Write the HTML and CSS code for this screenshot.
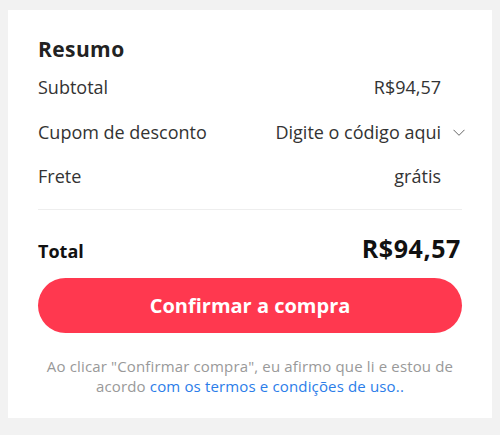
FILE: index.html
```html
<!DOCTYPE html>
<html lang="pt-BR">
<head>
  <meta charset="UTF-8" />
  <meta name="viewport" content="width=device-width, initial-scale=1.0"/>
  <title>Resumo do pedido</title>
  <link rel="stylesheet" href="styles.css">
</head>
<body>
  <div class="summary-card">
    <h2 class="summary-title">Resumo</h2>

    <div class="summary-row">
      <span>Subtotal</span>
      <span class="row-value">R$94,57</span>
    </div>
    <div class="summary-row">
      <span>Cupom de desconto</span>
      <span class="coupon-toggle">
        Digite o código aqui
        <svg class="chevron" width="12" height="7" viewBox="0 0 12 7">
          <path d="M0.5 0.8l5.5 5.5 5.5-5.5" fill="none" stroke="#666" stroke-width="1"/>
        </svg>
      </span>
    </div>
    <div class="summary-row">
      <span>Frete</span>
      <span class="row-value">grátis</span>
    </div>

    <div class="total-row">
      <span class="total-label">Total</span>
      <span class="total-price">R$94,57</span>
    </div>

    <button class="confirm-btn">Confirmar a compra</button>

    <p class="terms">
      <span>Ao clicar "Confirmar compra", eu afirmo que li e estou de</span><br>
      <span>acordo</span>
      <a href="#">com os termos e condições de uso..</a>
    </p>
  </div>
</body>
</html>
```

FILE: styles.css
```css
body {
  font-family: 'Open Sans', 'Noto Sans', sans-serif;
  margin: 0;
  padding: 10px 8px;
  background: #f2f2f2;
  color: #333;
}
.summary-card {
  background: white;
  padding: 25px 30px 20px;
  height: 408px;
  box-sizing: border-box;
}
.summary-title {
  margin: 0 0 2px;
  font-size: 21px;
  line-height: 28px;
  letter-spacing: 0.4px;
  font-weight: 700;
  color: #222;
}
.summary-row {
  display: flex;
  justify-content: space-between;
  align-items: center;
  height: 44.5px;
  font-size: 18px;
}
.row-value {
  padding-right: 21px;
}
.coupon-toggle {
  display: flex;
  align-items: center;
  gap: 12px;
  margin-right: -3px;
}
.chevron {
  margin-top: 2px;
}
.total-row {
  display: flex;
  justify-content: space-between;
  align-items: baseline;
  margin-top: 10px;
  padding-top: 22px;
  border-top: 1px solid #eeeeee;
  color: #111;
  font-weight: 700;
}
.total-label {
  font-size: 18px;
}
.total-price {
  font-size: 25px;
  line-height: 32px;
  letter-spacing: 0.6px;
  margin-right: 1px;
}
.confirm-btn {
  display: block;
  width: 100%;
  height: 55px;
  margin-top: 14px;
  border: none;
  border-radius: 28px;
  background: #ff384f;
  color: white;
  font-family: inherit;
  font-size: 20px;
  font-weight: 700;
  cursor: pointer;
}
.terms {
  margin: 23px 0 0;
  text-align: center;
  font-size: 15px;
  line-height: 20px;
  letter-spacing: 0.15px;
  color: #999;
}
.terms a {
  color: #2b7de9;
  text-decoration: none;
}
```
